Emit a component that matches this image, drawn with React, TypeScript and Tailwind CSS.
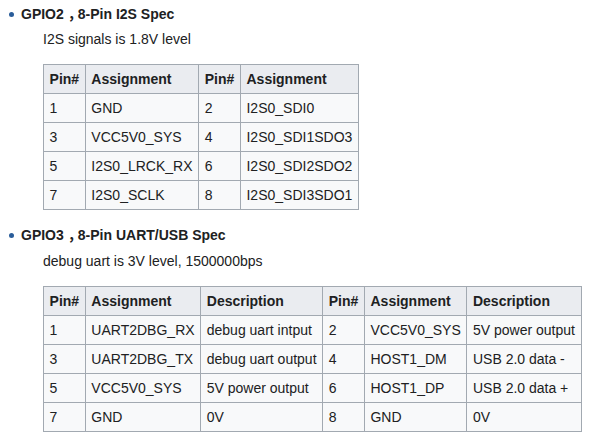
import React from "react";

const th = "border border-[#a2a9b1] bg-[#eaecf0] px-[5.6px] py-[2.8px] text-left font-bold";
const td = "border border-[#a2a9b1] px-[5.6px] py-[2.8px] text-left";

function Table({ head, rows }: { head: string[]; rows: string[][] }) {
  return (
    <table className="mt-[14px] ml-[43px] border-collapse bg-[#f8f9fa] text-[14px] leading-[22.4px] text-[#202122]">
      <thead>
        <tr>
          {head.map((h, i) => (
            <th key={i} className={th}>{h}</th>
          ))}
        </tr>
      </thead>
      <tbody>
        {rows.map((r, i) => (
          <tr key={i}>
            {r.map((c, j) => (
              <td key={j} className={td}>{c}</td>
            ))}
          </tr>
        ))}
      </tbody>
    </table>
  );
}

function Heading({ left, right }: { left: string; right: string }) {
  return (
    <div className="flex items-center h-[22px]">
      <span className="ml-[9px] mr-[7px] inline-block w-[5px] h-[5px] rounded-full bg-[#2a5d9a]" />
      <span className="font-bold whitespace-nowrap">
        {left}
        <span className="pl-[4px] tracking-[-4px]">，</span>
        {right}
      </span>
    </div>
  );
}

export default function App() {
  return (
    <div
      className="w-[591px] h-[441px] bg-white text-[14px] text-[#202122] pt-[3px] overflow-hidden"
      style={{ fontFamily: '"Liberation Sans", Arial, "Noto Sans CJK SC", sans-serif' }}
    >
      <Heading left="GPIO2" right="8-Pin I2S Spec" />
      <div className="ml-[43px] mt-[3px] leading-[22px]">I2S signals is 1.8V level</div>
      <Table
        head={["Pin#", "Assignment", "Pin#", "Assignment"]}
        rows={[
          ["1", "GND", "2", "I2S0_SDI0"],
          ["3", "VCC5V0_SYS", "4", "I2S0_SDI1SDO3"],
          ["5", "I2S0_LRCK_RX", "6", "I2S0_SDI2SDO2"],
          ["7", "I2S0_SCLK", "8", "I2S0_SDI3SDO1"],
        ]}
      />
      <div className="mt-[14px]">
        <Heading left="GPIO3" right="8-Pin UART/USB Spec" />
      </div>
      <div className="ml-[43px] mt-[4px] leading-[22px]">debug uart is 3V level, 1500000bps</div>
      <Table
        head={["Pin#", "Assignment", "Description", "Pin#", "Assignment", "Description"]}
        rows={[
          ["1", "UART2DBG_RX", "debug uart intput", "2", "VCC5V0_SYS", "5V power output"],
          ["3", "UART2DBG_TX", "debug uart output", "4", "HOST1_DM", "USB 2.0 data -"],
          ["5", "VCC5V0_SYS", "5V power output", "6", "HOST1_DP", "USB 2.0 data +"],
          ["7", "GND", "0V", "8", "GND", "0V"],
        ]}
      />
    </div>
  );
}
